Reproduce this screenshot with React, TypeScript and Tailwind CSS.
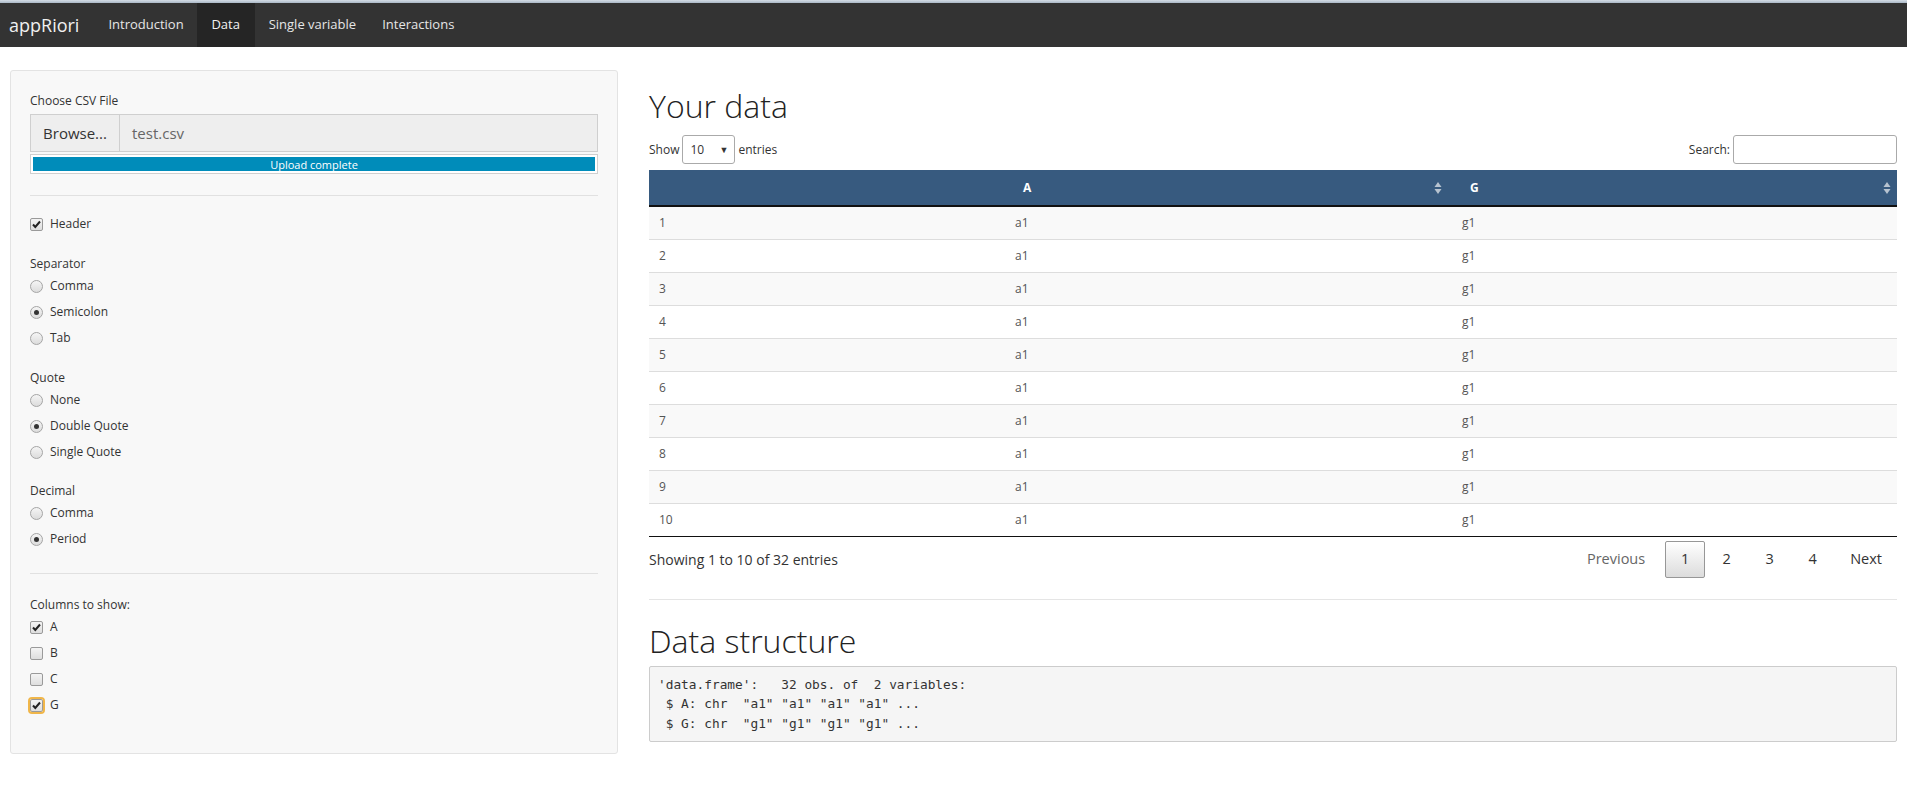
import React from "react";

const Check = ({ checked, focus }: { checked?: boolean; focus?: boolean }) => (
  <span
    className={
      "relative inline-flex h-[13px] w-[13px] items-center justify-center rounded-[2px] border border-[#9a9a9a] bg-gradient-to-b from-[#f4f4f4] to-[#dedede] " +
      (focus ? "outline outline-2 outline-[#f0b64a] outline-offset-0" : "")
    }
  >
    {checked && (
      <svg width="11" height="11" viewBox="0 0 11 11" className="absolute">
        <path d="M2 5.5 L4.3 8 L9 2.5" fill="none" stroke="#222" strokeWidth="2" />
      </svg>
    )}
  </span>
);

const Radio = ({ checked }: { checked?: boolean }) => (
  <span className="relative inline-flex h-[13px] w-[13px] items-center justify-center rounded-full border border-[#a5a5a5] bg-gradient-to-b from-[#f5f5f5] to-[#dcdcdc]">
    {checked && <span className="h-[5px] w-[5px] rounded-full bg-[#333]" />}
  </span>
);

const Option = ({ label, radio, checked, focus }: { label: string; radio?: boolean; checked?: boolean; focus?: boolean }) => (
  <div className="flex h-[26px] items-center gap-[7px]">
    {radio ? <Radio checked={checked} /> : <Check checked={checked} focus={focus} />}
    <span className="text-[12px] text-[#333]">{label}</span>
  </div>
);

const Label = ({ children }: { children: React.ReactNode }) => (
  <div className="flex h-[18px] items-center text-[12px] text-[#333]">{children}</div>
);

const SortIcon = () => (
  <svg width="8" height="14" viewBox="0 0 8 14">
    <path d="M4 1 L7.5 6 L0.5 6 Z" fill="#b7c3d0" />
    <path d="M4 13 L7.5 8 L0.5 8 Z" fill="#b7c3d0" />
  </svg>
);

export default function App() {
  const rows = Array.from({ length: 10 }, (_, i) => i + 1);
  return (
    <div className="min-h-screen bg-white text-[#333]" style={{ fontFamily: '"Open Sans", "Noto Sans", sans-serif' }}>
      {/* Navbar */}
      <div className="h-[3px] bg-gradient-to-b from-[#d5dde6] to-[#aab8c6]" />
      <nav className="flex h-[44px] items-stretch bg-[#333333]">
        <div className="flex items-center pl-[9px] pr-[29px] text-[18px] text-[#f0f0f0]">appRiori</div>
        <div className="flex items-center text-[13px] text-[#e6e6e6]">
          <span className="mr-[13px]">Introduction</span>
        </div>
        <div className="flex w-[58px] items-center justify-center bg-[#252525] text-[13px] text-[#f2f2f2]">Data</div>
        <div className="flex items-center pl-[14px] text-[13px] text-[#e6e6e6]">
          <span className="mr-[26px]">Single variable</span>
          <span>Interactions</span>
        </div>
      </nav>

      <div className="flex gap-[31px] px-[10px]">
        {/* Sidebar */}
        <div className="mt-[23px] w-[608px] shrink-0 self-start rounded-[3px] border border-[#e3e3e3] bg-[#f8f8f8] px-[19px] pb-[35px] pt-[21px]">
          <div className="flex h-[17px] items-center text-[12px]">Choose CSV File</div>
          <div className="mt-[5px] flex h-[38px] border border-[#cfcfcf] bg-[#eeeeee]">
            <div className="flex w-[89px] items-center justify-center border-r border-[#cfcfcf] text-[15px] text-[#333]">Browse...</div>
            <div className="flex items-center pl-[12px] text-[15px] text-[#666]">test.csv</div>
          </div>
          <div className="mt-[2px] h-[20px] border border-[#cfcfcf] bg-white p-[2px]">
            <div className="flex h-full items-center justify-center bg-[#008cba] text-[11px] leading-none text-white">Upload complete</div>
          </div>
          <div className="mt-[21px] border-t border-[#e1e1e1]" />
          <div className="mt-[15px]">
            <Option label="Header" checked />
          </div>
          <div className="mt-[18px]">
            <Label>Separator</Label>
            <Option label="Comma" radio />
            <Option label="Semicolon" radio checked />
            <Option label="Tab" radio />
          </div>
          <div className="mt-[18px]">
            <Label>Quote</Label>
            <Option label="None" radio />
            <Option label="Double Quote" radio checked />
            <Option label="Single Quote" radio />
          </div>
          <div className="mt-[17px]">
            <Label>Decimal</Label>
            <Option label="Comma" radio />
            <Option label="Period" radio checked />
          </div>
          <div className="mt-[21px] border-t border-[#e1e1e1]" />
          <div className="mt-[22px]">
            <Label>Columns to show:</Label>
            <Option label="A" checked />
            <Option label="B" />
            <Option label="C" />
            <Option label="G" checked focus />
          </div>
        </div>

        {/* Main */}
        <div className="min-w-0 flex-1 pt-[39px]">
          <h2 className="flex h-[40px] items-center text-[32px] font-light leading-none text-[#222]">Your data</h2>
          <div className="mt-[9px] flex h-[29px] items-center justify-between text-[12px] text-[#333]">
            <div className="flex items-center gap-[3px]">
              <span>Show</span>
              <div className="flex h-[29px] w-[53px] items-center justify-between rounded-[3px] border border-[#aaa] bg-white pl-[7px] pr-[6px] text-[12px]">
                <span>10</span>
                <span className="text-[9px]">▼</span>
              </div>
              <span>entries</span>
            </div>
            <div className="flex items-center gap-[3px]">
              <span>Search:</span>
              <div className="h-[29px] w-[164px] rounded-[3px] border border-[#aaa] bg-white" />
            </div>
          </div>

          <table className="mt-[6px] w-full border-collapse text-[12px]">
            <thead>
              <tr className="h-[36px] bg-[#375a7f] text-white">
                <th className="w-[356px] border-b-2 border-[#111]" />
                <th className="w-[447px] border-b-2 border-[#111] pl-[18px] pr-[10px] text-left font-bold">
                  <div className="flex items-center">
                    <span className="flex-1">A</span>
                    <SortIcon />
                  </div>
                </th>
                <th className="border-b-2 border-[#111] pl-[18px] pr-[6px] text-left font-bold">
                  <div className="flex items-center">
                    <span className="flex-1">G</span>
                    <SortIcon />
                  </div>
                </th>
              </tr>
            </thead>
            <tbody>
              {rows.map((r) => (
                <tr
                  key={r}
                  className={
                    "h-[33px] text-[#555] " +
                    (r % 2 === 1 ? "bg-[#f9f9f9]" : "bg-white") +
                    (r === 10 ? " border-b border-[#111]" : " border-b border-[#dddddd]")
                  }
                >
                  <td className="px-[10px]">{r}</td>
                  <td className="px-[10px]">a1</td>
                  <td className="px-[10px]">g1</td>
                </tr>
              ))}
            </tbody>
          </table>

          <div className="mt-[4px] flex h-[37px] items-center justify-between">
            <span className="text-[14px] text-[#333]">Showing 1 to 10 of 32 entries</span>
            <div className="flex items-center text-[14.5px] text-[#333]">
              <span className="mr-[20px] text-[#666]">Previous</span>
              <span className="flex h-[37px] w-[40px] items-center justify-center rounded-[2px] border border-[#979797] bg-gradient-to-b from-white to-[#dcdcdc]">1</span>
              <span className="flex w-[43px] justify-center">2</span>
              <span className="flex w-[43px] justify-center">3</span>
              <span className="flex w-[43px] justify-center">4</span>
              <span className="ml-[16px] mr-[15px]">Next</span>
            </div>
          </div>

          <div className="mt-[21px] border-t border-[#e5e5e5]" />

          <h2 className="mt-[21px] flex h-[40px] items-center text-[32px] font-light leading-none text-[#222]">Data structure</h2>
          <pre
            className="mt-[5px] rounded-[2px] border border-[#cccccc] bg-[#f5f5f5] px-[8px] py-[8px] text-[12.8px] leading-[19.5px] text-[#333]"
            style={{ fontFamily: '"DejaVu Sans Mono", "Liberation Mono", monospace' }}
          >
{`'data.frame':   32 obs. of  2 variables:
 $ A: chr  "a1" "a1" "a1" "a1" ...
 $ G: chr  "g1" "g1" "g1" "g1" ...`}
          </pre>
        </div>
      </div>
    </div>
  );
}
